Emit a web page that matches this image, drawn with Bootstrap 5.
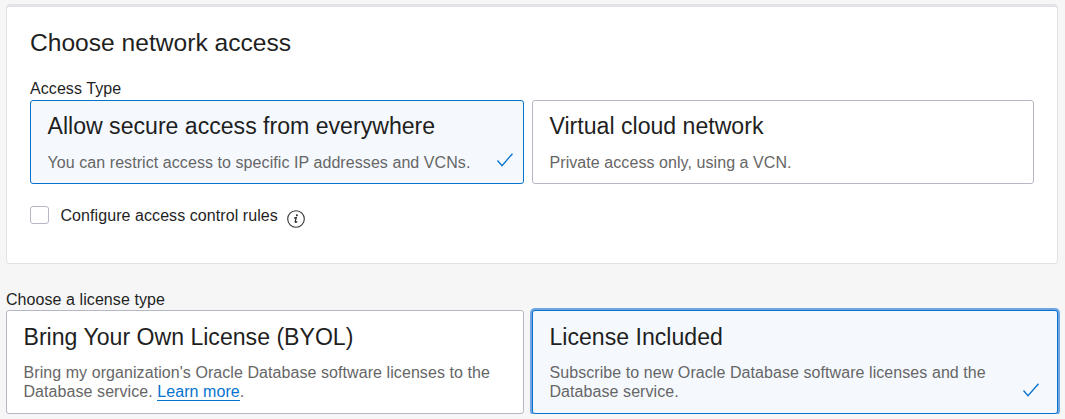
<!DOCTYPE html>
<html lang="en">
<head>
<meta charset="utf-8">
<meta name="viewport" content="width=device-width, initial-scale=1">
<title>Network access and license</title>
<link href="https://cdn.jsdelivr.net/npm/bootstrap@5.3.0/dist/css/bootstrap.min.css" rel="stylesheet">
<style>
body{background:#f6f6f6;color:#1f1f1f;font-family:"Liberation Sans",Arial,sans-serif;font-size:16px;line-height:19px;letter-spacing:.07px;overflow:hidden}
.page{width:1052px;margin:4px 0 0 6px}
.panel{height:260px;border:1px solid #e2e2e4;border-top:3px solid #e3e3e7;border-radius:4px;padding:22px 23px 0}
.panel-title{font-size:24.6px;line-height:28px;font-weight:400;color:#1f1f1f;letter-spacing:0;margin:0 0 22px}
.option-title{font-size:23.1px;line-height:28px;font-weight:400;color:#1f1f1f;letter-spacing:0;margin:0 0 13px}
.options{display:grid;gap:8px}
.access{grid-template-columns:494px 502px;height:84px;margin-top:2px}
.license{grid-template-columns:518px 526px;height:104px;margin-top:1px}
.option{background:#fff;border:1px solid #b3b8c4;border-radius:3px;padding:11px 10px 0 16.5px}
.license .option{padding-top:12px}
.license .option-title{margin-bottom:12px}
.option.selected{background:#f5f9fe;border-color:#0572ce}
.option.focused{box-shadow:0 0 0 2px #71a5e2}
.option p{color:#666}
.tick{width:16px;height:14px;flex:none;margin-top:41px}
.license .tick{margin:60px 8px 0 0}
.rules{margin-top:22px}
.form-check-input.box{width:19px;height:18px;border:1px solid #b3b8c4;border-radius:3px}
.rules label{margin-left:11.5px;width:217px;white-space:nowrap}
.info{margin:4px 0 0 9.5px}
.license-section{margin-top:26px}
.more{color:#0572ce;border-bottom:1px solid #0572ce}
</style>
<script src="https://cdn.jsdelivr.net/npm/bootstrap@5.3.0/dist/js/bootstrap.bundle.min.js"></script>
</head>
<body>
<main class="page">
  <section class="panel bg-white">
    <h2 class="panel-title">Choose network access</h2>
    <div>Access Type</div>
    <div class="options access">
      <div class="option selected d-flex">
        <div class="flex-grow-1">
          <h3 class="option-title">Allow secure access from everywhere</h3>
          <p class="mb-0">You can restrict access to specific IP addresses and VCNs.</p>
        </div>
        <svg class="tick" viewBox="0 0 16 14" fill="none" stroke="#0572ce" stroke-width="1.3"><path d="M.5 7.5 5 12.7 15.5.7"/></svg>
      </div>
      <div class="option">
        <h3 class="option-title">Virtual cloud network</h3>
        <p class="mb-0">Private access only, using a VCN.</p>
      </div>
    </div>
    <div class="rules d-flex">
      <input class="form-check-input box m-0" type="checkbox" id="acl">
      <label for="acl">Configure access control rules</label>
      <svg class="info" width="18" height="18" viewBox="0 0 18 18"><circle cx="9" cy="9" r="8.3" fill="none" stroke="#333" stroke-width="1.1"/><circle cx="9.9" cy="5.2" r=".95" fill="#222"/><path d="M7.1 8.1 9.3 7.6 8.2 11.6Q8 13 10.3 11.5" fill="none" stroke="#222" stroke-width="1.2"/></svg>
    </div>
  </section>
  <section class="license-section">
    <div>Choose a license type</div>
    <div class="options license">
      <div class="option">
        <h3 class="option-title">Bring Your Own License (BYOL)</h3>
        <p class="mb-0">Bring my organization's Oracle Database software licenses to the<br>Database service. <a href="#" class="more text-decoration-none">Learn more</a>.</p>
      </div>
      <div class="option selected focused d-flex">
        <div class="flex-grow-1">
          <h3 class="option-title">License Included</h3>
          <p class="mb-0">Subscribe to new Oracle Database software licenses and the<br>Database service.</p>
        </div>
        <svg class="tick" viewBox="0 0 16 14" fill="none" stroke="#0572ce" stroke-width="1.3"><path d="M.5 7.5 5 12.7 15.5.7"/></svg>
      </div>
    </div>
  </section>
</main>
</body>
</html>
